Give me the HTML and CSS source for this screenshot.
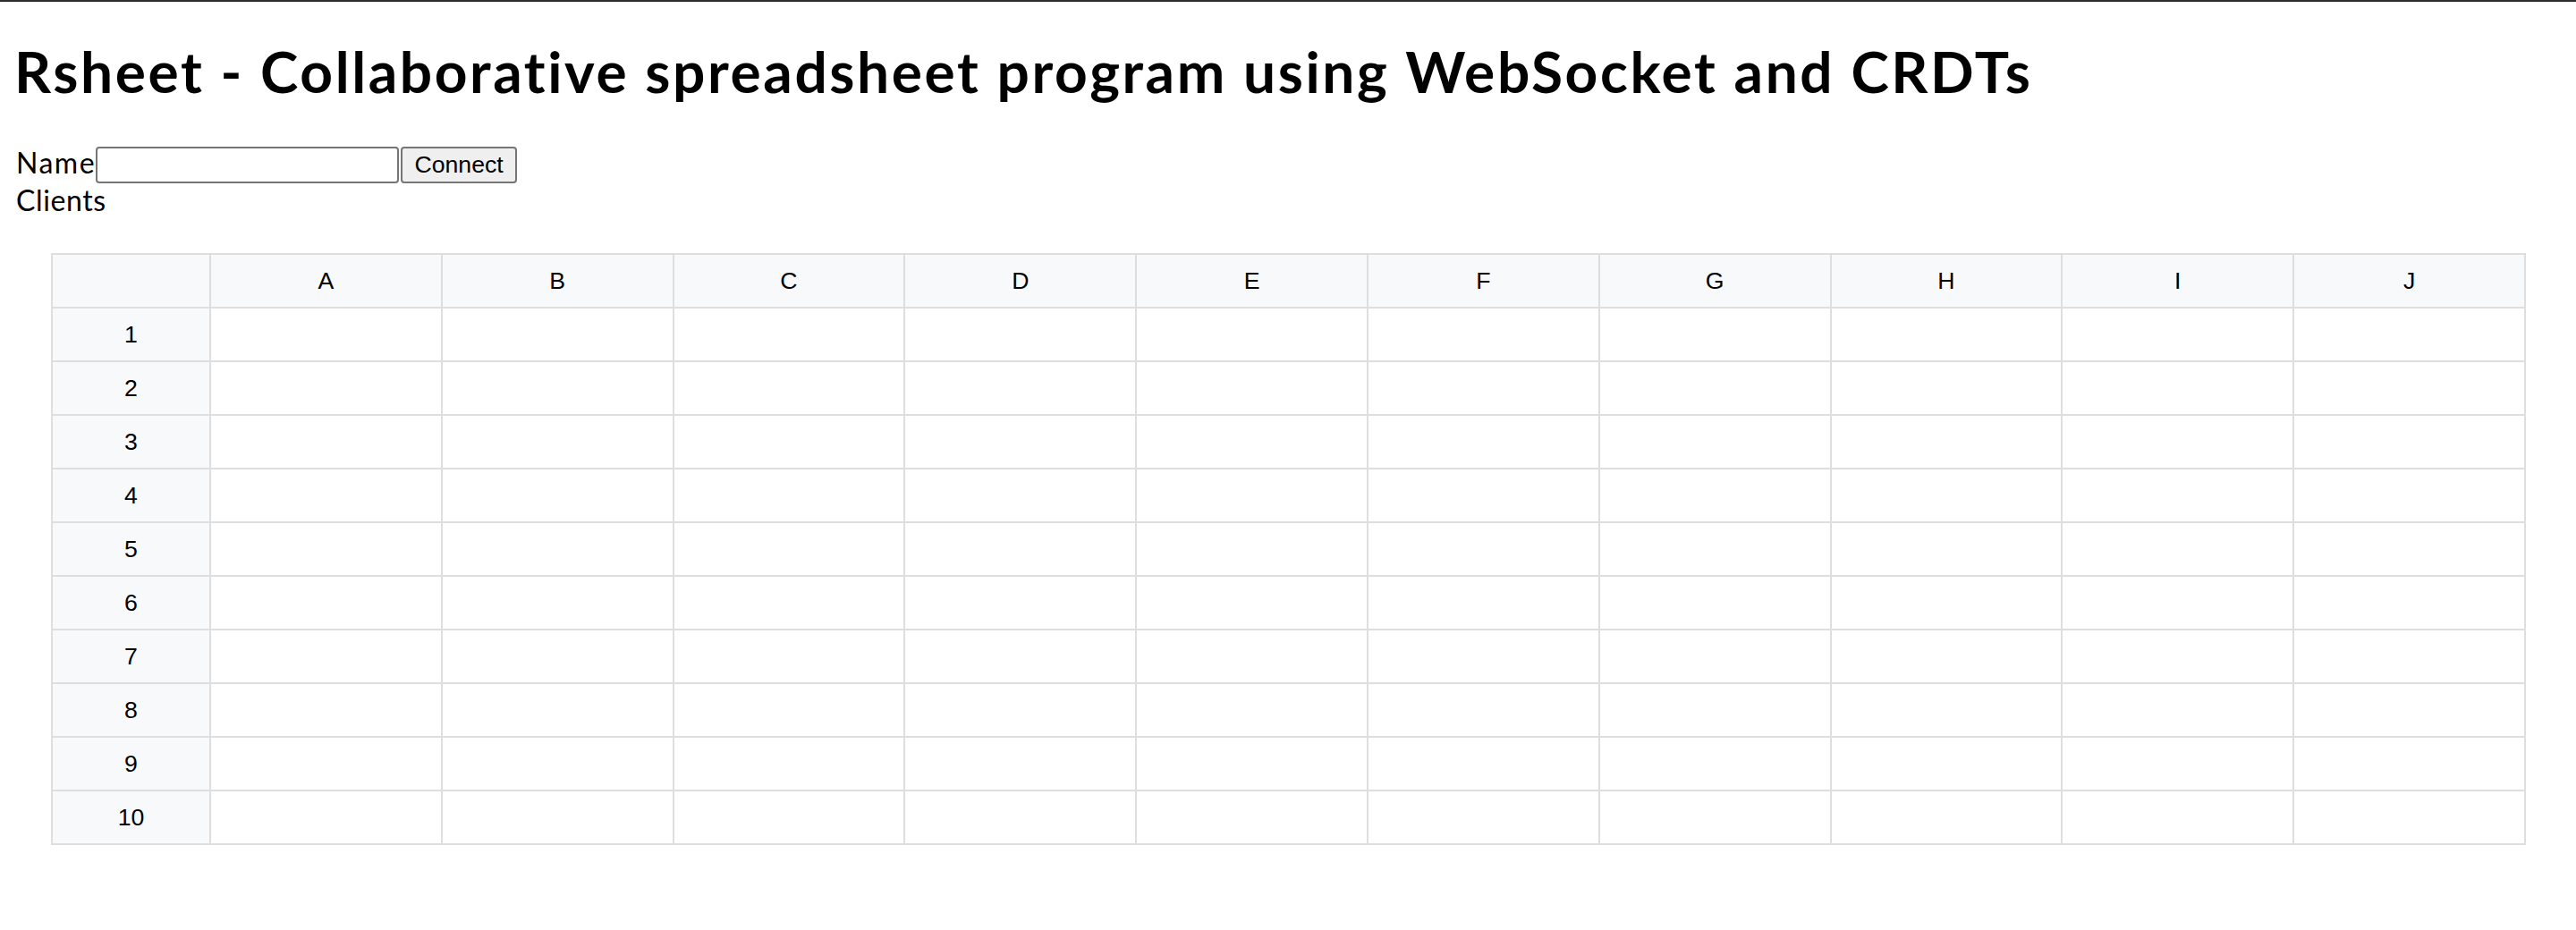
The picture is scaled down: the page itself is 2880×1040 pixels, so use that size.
FILE: index.html
```html
<!DOCTYPE html>
<html lang="en">
<head>
<meta charset="utf-8">
<title>Rsheet</title>
<link rel="stylesheet" href="styles.css">
</head>
<body>
<div class="topbar"></div>
<main class="page">
  <h1 class="title">Rsheet - Collaborative spreadsheet program using WebSocket and CRDTs</h1>
  <div class="connect-row"><label class="name-label" for="name">Name</label><input class="name-input" id="name" type="text"><button class="connect-btn" type="button">Connect</button></div>
  <div class="clients">Clients</div>
  <table class="sheet">
    <colgroup><col class="col-index"><col><col><col><col><col><col><col><col><col><col></colgroup>
    <thead>
      <tr><th class="corner"></th><th>A</th><th>B</th><th>C</th><th>D</th><th>E</th><th>F</th><th>G</th><th>H</th><th>I</th><th>J</th></tr>
    </thead>
    <tbody>
      <tr><th>1</th><td></td><td></td><td></td><td></td><td></td><td></td><td></td><td></td><td></td><td></td></tr>
      <tr><th>2</th><td></td><td></td><td></td><td></td><td></td><td></td><td></td><td></td><td></td><td></td></tr>
      <tr><th>3</th><td></td><td></td><td></td><td></td><td></td><td></td><td></td><td></td><td></td><td></td></tr>
      <tr><th>4</th><td></td><td></td><td></td><td></td><td></td><td></td><td></td><td></td><td></td><td></td></tr>
      <tr><th>5</th><td></td><td></td><td></td><td></td><td></td><td></td><td></td><td></td><td></td><td></td></tr>
      <tr><th>6</th><td></td><td></td><td></td><td></td><td></td><td></td><td></td><td></td><td></td><td></td></tr>
      <tr><th>7</th><td></td><td></td><td></td><td></td><td></td><td></td><td></td><td></td><td></td><td></td></tr>
      <tr><th>8</th><td></td><td></td><td></td><td></td><td></td><td></td><td></td><td></td><td></td><td></td></tr>
      <tr><th>9</th><td></td><td></td><td></td><td></td><td></td><td></td><td></td><td></td><td></td><td></td></tr>
      <tr><th>10</th><td></td><td></td><td></td><td></td><td></td><td></td><td></td><td></td><td></td><td></td></tr>
    </tbody>
  </table>
</main>
</body>
</html>
```

FILE: styles.css
```css
html, body {
  margin: 0;
  padding: 0;
  background: #ffffff;
}

body {
  font-family: "Lato", "Noto Sans", sans-serif;
  color: #000000;
}

.topbar {
  height: 2px;
  background: #2d2d30;
}

.page {
  padding: 0 16px;
}

.title {
  margin: 40px 0 44px 0;
  font-family: "Lato", "Noto Sans", sans-serif;
  font-weight: 700;
  font-size: 64px;
  line-height: 75px;
  letter-spacing: 2.6px;
  padding-left: 0;
}

.connect-row {
  display: flex;
  align-items: flex-start;
  height: 43px;
}

.name-label {
  font-size: 32px;
  line-height: 38px;
  padding: 2px 0 0 2px;
  letter-spacing: 1.5px;
}

.name-input {
  box-sizing: border-box;
  margin: 3px 0 0 0;
  width: 339px;
  height: 41px;
  border: 2px solid #767676;
  border-radius: 4px;
  padding: 2px 4px;
  font-family: "Liberation Sans", Arial, sans-serif;
  font-size: 26.67px;
  background: #ffffff;
}

.connect-btn {
  box-sizing: border-box;
  margin: 3px 0 0 2px;
  width: 130px;
  height: 41px;
  border: 2px solid #767676;
  border-radius: 4px;
  background: #efefef;
  padding: 0;
  font-family: "Liberation Sans", Arial, sans-serif;
  font-size: 26.67px;
  color: #000000;
}

.clients {
  font-size: 32px;
  line-height: 38px;
  padding: 1px 0 0 2px;
  letter-spacing: 0.6px;
}

.sheet {
  margin: 40px 40px 0 41px;
  width: calc(100% - 81px);
  table-layout: fixed;
  border-collapse: collapse;
  font-family: "Liberation Sans", Arial, sans-serif;
  font-size: 26.67px;
}

.col-index {
  width: 177px;
}

.sheet th,
.sheet td {
  border: 2px solid #dedede;
  height: 60px;
  box-sizing: border-box;
  padding: 0;
  text-align: center;
  vertical-align: middle;
  font-weight: 400;
}

.sheet th {
  background: #f8f9fa;
}

.sheet td {
  background: #ffffff;
}
```
